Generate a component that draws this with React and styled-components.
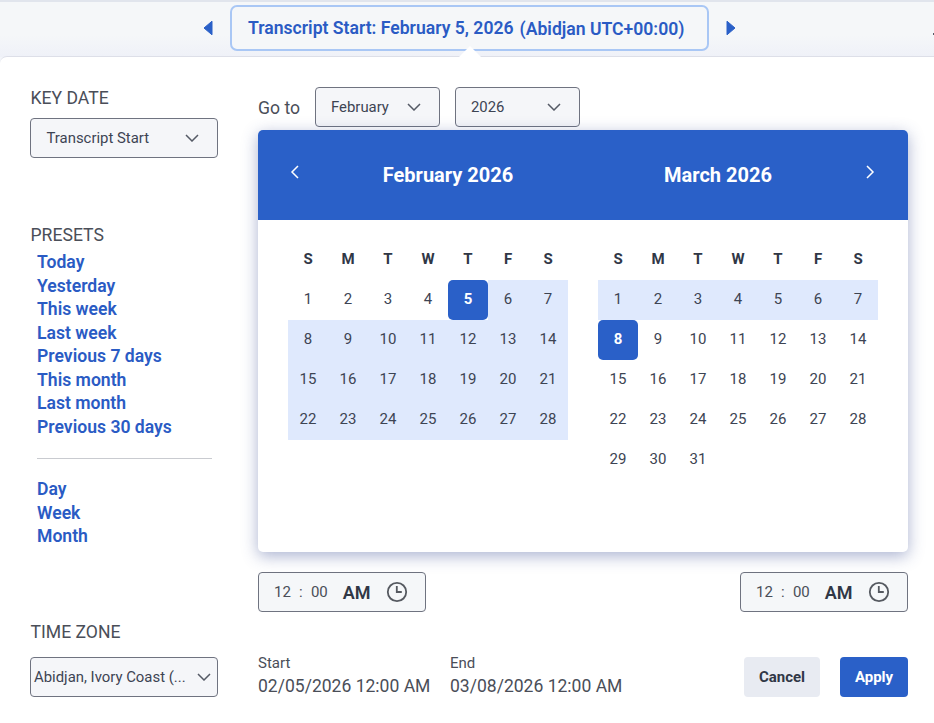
import React from "react";
import styled, { createGlobalStyle } from "styled-components";

const GlobalStyle = createGlobalStyle`
  * {
    box-sizing: border-box;
  }

  body {
    margin: 0;
    overflow: hidden;
    background: #f3f5f9;
    color: #4a4e58;
    font-family: Roboto, "Liberation Sans", sans-serif;
  }

  button {
    font-family: inherit;
    cursor: pointer;
  }

  svg {
    flex-shrink: 0;
  }
`;

const Page = styled.div`
  width: 934px;
  height: 723px;
`;

const TopBar = styled.header`
  display: flex;
  align-items: flex-start;
  height: 57px;
  padding: 3px 0 0 203px;
  border-top: 2px solid #e1e5ed;
  background: linear-gradient(#f5f7f9 60%, #eff1f8);
  overflow: hidden;
`;

const StepButton = styled.button`
  display: flex;
  width: 10px;
  height: 16px;
  margin-top: 15px;
  padding: 0;
  border: none;
  background: none;
`;

const RangeButton = styled.button`
  display: flex;
  gap: 6px;
  width: 479px;
  height: 46px;
  margin: 0 17px;
  padding: 11px 0 0 16px;
  border: 2px solid #a9c7f5;
  border-radius: 7px;
  background: #f5f7f9;
  color: #2a5bc4;
  font-size: 17.6px;
  line-height: 20px;
  font-weight: 600;
  white-space: nowrap;
`;

const ZoneText = styled.span`
  padding-top: 1px;
`;

const Edge = styled.span`
  width: 1px;
  height: 2px;
  margin: 28px 0 0 auto;
  background: #555b66;
`;

const Panel = styled.main`
  position: relative;
  display: flex;
  gap: 40px;
  height: 667px;
  margin-top: -1px;
  padding: 30px 26px 26px 30px;
  border-top: 1px solid #dddfe8;
  border-radius: 7px 0 0 0;
  background: #fff;
`;

const Caret = styled.svg`
  position: absolute;
  top: -12px;
  left: 458px;
  width: 24px;
  height: 13px;
`;

const Sidebar = styled.aside`
  display: flex;
  flex-direction: column;
  width: 188px;
`;

const Label = styled.div`
  height: 22px;
  padding-left: 0.5px;
  margin-top: ${(props) => props.$top || 0}px;
  font-size: 17.6px;
  line-height: 22px;
`;

const Select = styled.button`
  display: flex;
  align-items: center;
  justify-content: space-between;
  width: ${(props) => props.$width}px;
  height: 40px;
  margin-top: ${(props) => props.$top || 0}px;
  padding: ${(props) => props.$padding || "0 18px 0 15px"};
  border: 1px solid #6f7380;
  border-radius: 4px;
  background: #f5f6f9;
  color: #3d4453;
  font-size: 14.9px;
  white-space: nowrap;
`;

const Presets = styled.nav`
  display: flex;
  flex-direction: column;
  padding-left: 7px;
  margin-top: ${(props) => props.$top || 0}px;
`;

const Preset = styled.a`
  height: 23.55px;
  color: #2a5bc4;
  font-size: 17.6px;
  line-height: 23.55px;
  font-weight: 600;
  cursor: pointer;
`;

const Divider = styled.hr`
  width: 175px;
  margin: 19px 0 0 7px;
  border: none;
  border-top: 1px solid #c9cbd0;
`;

const Content = styled.section`
  display: flex;
  flex-direction: column;
  width: 650px;
`;

const GoTo = styled.div`
  display: flex;
  align-items: center;
  gap: 15px;
  height: 40px;
  font-size: 17.6px;
  white-space: nowrap;
`;

const GoToLabel = styled.span`
  width: 42px;
  padding-top: 2px;
`;

const Calendar = styled.div`
  height: 422px;
  margin-top: 3px;
  border-radius: 5px;
  background: #fff;
  box-shadow: 0 4px 16px rgba(53, 72, 143, 0.42);
  /* lets the shadow fall over the selects above */
  z-index: 1;
`;

const CalendarHeader = styled.div`
  display: grid;
  grid-template-columns: 55px 270px 270px 55px;
  height: 90px;
  border-radius: 5px 5px 0 0;
  background: #2a60c8;
  color: #fff;
`;

const MonthTitle = styled.h2`
  margin: 0;
  padding-top: 33px;
  font-size: 20px;
  line-height: 24px;
  font-weight: 700;
  text-align: center;
`;

const MonthArrow = styled.button`
  display: flex;
  justify-content: ${(props) => (props.$end ? "flex-end" : "flex-start")};
  height: 14px;
  margin-top: 35px;
  padding: ${(props) => (props.$end ? "0 33px 0 0" : "0 0 0 32px")};
  border: none;
  background: none;
`;

const Months = styled.div`
  display: flex;
  gap: 30px;
  padding: 20px 30px 0;
`;

const Month = styled.div`
  display: grid;
  grid-template-columns: repeat(7, 40px);
  grid-auto-rows: 40px;
`;

const Weekday = styled.div`
  padding-bottom: 2px;
  color: #303746;
  font-size: 15px;
  line-height: 38px;
  font-weight: 700;
  text-align: center;
`;

const Day = styled.div`
  border-radius: ${(props) => (props.$selected ? "5px" : 0)};
  background: ${(props) =>
    props.$selected ? "#2a60c8" : props.$inRange ? "#dfe9fd" : "transparent"};
  color: ${(props) => (props.$selected ? "#fff" : "#3d4453")};
  font-size: 15px;
  line-height: 38px;
  font-weight: ${(props) => (props.$selected ? 700 : 400)};
  text-align: center;
`;

const Times = styled.div`
  display: flex;
  justify-content: space-between;
  margin-top: 20px;
`;

const TimeField = styled.div`
  display: flex;
  align-items: center;
  width: 168px;
  height: 40px;
  padding-left: 15px;
  border: 1px solid #6f7380;
  border-radius: 4px;
  background: #f5f7f9;
  color: #4a4e58;
  font-size: 15px;
`;

const Colon = styled.span`
  width: 20px;
  text-align: center;
`;

const Meridiem = styled.span`
  margin: 1px 15px 0 15px;
  color: #303746;
  font-size: 18px;
  font-weight: 600;
`;

const Footer = styled.footer`
  display: flex;
  height: 40px;
  margin-top: 45px;
`;

const DateSummary = styled.div`
  width: 192px;
  margin-top: -4px;
  font-size: 17.55px;
  line-height: 26px;
  white-space: nowrap;

  small {
    display: block;
    font-size: 15px;
    line-height: 20px;
  }
`;

const Button = styled.button`
  width: ${(props) => (props.$primary ? 68 : 76)}px;
  height: 40px;
  margin-left: ${(props) => (props.$primary ? "20px" : "auto")};
  padding: 0;
  border: none;
  border-radius: 4px;
  background: ${(props) => (props.$primary ? "#2a60c8" : "#e8ebf2")};
  color: ${(props) => (props.$primary ? "#fff" : "#303746")};
  font-size: 15px;
  font-weight: 700;
`;

const ChevronDown = () => (
  <svg width="14" height="8" viewBox="0 0 14 8" fill="none">
    <path d="M1 1l6 6 6-6" stroke="#555a66" strokeWidth="1.5" />
  </svg>
);

const Clock = () => (
  <svg width="22" height="22" viewBox="0 0 22 22" fill="none">
    <circle cx="11" cy="11" r="9.2" stroke="#555960" strokeWidth="1.8" />
    <path d="M10.8 5v6h5" stroke="#555960" strokeWidth="1.8" />
  </svg>
);

const presets = [
  "Today",
  "Yesterday",
  "This week",
  "Last week",
  "Previous 7 days",
  "This month",
  "Last month",
  "Previous 30 days",
];

const periods = ["Day", "Week", "Month"];

const weekdays = ["S", "M", "T", "W", "T", "F", "S"];

const months = [
  { name: "February 2026", days: 28, selected: 5, from: 5, to: 28 },
  { name: "March 2026", days: 31, selected: 8, from: 1, to: 8 },
];

const TimePicker = () => (
  <TimeField>
    <span>12</span>
    <Colon>:</Colon>
    <span>00</span>
    <Meridiem>AM</Meridiem>
    <Clock />
  </TimeField>
);

const App = () => {
  return (
    <Page>
      <GlobalStyle />
      <TopBar>
        <StepButton aria-label="Previous range">
          <svg width="10" height="16" viewBox="0 0 10 16">
            <path
              d="M9 1.2v13.6L1 8z"
              fill="#2a60c8"
              stroke="#2a60c8"
              strokeLinejoin="round"
            />
          </svg>
        </StepButton>
        <RangeButton>
          <span>Transcript Start: February 5, 2026</span>
          <ZoneText>(Abidjan UTC+00:00)</ZoneText>
        </RangeButton>
        <StepButton aria-label="Next range">
          <svg width="10" height="16" viewBox="0 0 10 16">
            <path
              d="M1 1.2v13.6L9 8z"
              fill="#2a60c8"
              stroke="#2a60c8"
              strokeLinejoin="round"
            />
          </svg>
        </StepButton>
        <Edge />
      </TopBar>
      <Panel>
        <Caret viewBox="0 0 24 13">
          <path d="M0 13L12 1l12 12z" fill="#fff" />
        </Caret>
        <Sidebar>
          <Label>KEY DATE</Label>
          <Select $width={188} $top={9} $padding="0 18px 0 15.5px">
            Transcript Start
            <ChevronDown />
          </Select>
          <Label $top={66}>PRESETS</Label>
          <Presets $top={5}>
            {presets.map((preset) => (
              <Preset key={preset}>{preset}</Preset>
            ))}
          </Presets>
          <Divider />
          <Presets $top={19}>
            {periods.map((period) => (
              <Preset key={period}>{period}</Preset>
            ))}
          </Presets>
          <Label $top={72}>TIME ZONE</Label>
          <Select $width={188} $top={14} $padding="0 6px 0 3px">
            Abidjan, Ivory Coast (...
            <ChevronDown />
          </Select>
        </Sidebar>
        <Content>
          <GoTo>
            <GoToLabel>Go to</GoToLabel>
            <Select $width={125}>
              February
              <ChevronDown />
            </Select>
            <Select $width={125}>
              2026
              <ChevronDown />
            </Select>
          </GoTo>
          <Calendar>
            <CalendarHeader>
              <MonthArrow aria-label="Previous month">
                <svg width="9" height="14" viewBox="0 0 9 14" fill="none">
                  <path d="M8 1L2 7l6 6" stroke="#fff" strokeWidth="1.5" />
                </svg>
              </MonthArrow>
              {months.map((month) => (
                <MonthTitle key={month.name}>{month.name}</MonthTitle>
              ))}
              <MonthArrow $end aria-label="Next month">
                <svg width="9" height="14" viewBox="0 0 9 14" fill="none">
                  <path d="M1 1l6 6-6 6" stroke="#fff" strokeWidth="1.5" />
                </svg>
              </MonthArrow>
            </CalendarHeader>
            <Months>
              {months.map((month) => (
                <Month key={month.name}>
                  {weekdays.map((weekday, index) => (
                    <Weekday key={index}>{weekday}</Weekday>
                  ))}
                  {Array.from({ length: month.days }, (_, i) => i + 1).map(
                    (day) => (
                      <Day
                        key={day}
                        $selected={day === month.selected}
                        $inRange={day >= month.from && day <= month.to}
                      >
                        {day}
                      </Day>
                    )
                  )}
                </Month>
              ))}
            </Months>
          </Calendar>
          <Times>
            <TimePicker />
            <TimePicker />
          </Times>
          <Footer>
            <DateSummary>
              <small>Start</small>
              02/05/2026 12:00 AM
            </DateSummary>
            <DateSummary>
              <small>End</small>
              03/08/2026 12:00 AM
            </DateSummary>
            <Button>Cancel</Button>
            <Button $primary>Apply</Button>
          </Footer>
        </Content>
      </Panel>
    </Page>
  );
};

export default App;
